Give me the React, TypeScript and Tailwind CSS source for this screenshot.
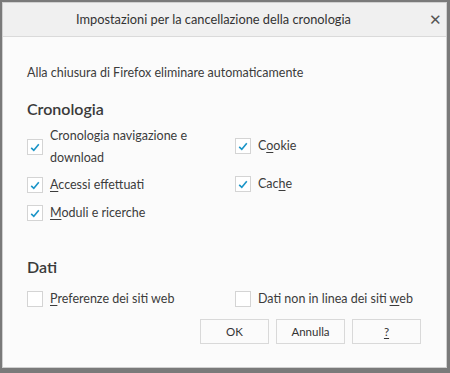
import React from "react";

function Box({ checked }: { checked?: boolean }) {
  return (
    <span className="flex h-[16px] w-[16px] shrink-0 items-center justify-center border border-[#d4d4d4] bg-white">
      {checked && (
        <svg width="10" height="9" viewBox="0 0 10 9">
          <path d="M1.2 4.8 L3.8 7.3 L8.8 1.3" fill="none" stroke="#1b95c8" strokeWidth="1.6" />
        </svg>
      )}
    </span>
  );
}

function Item({ checked, children, className = "" }: { checked?: boolean; children: React.ReactNode; className?: string }) {
  return (
    <div className={"flex items-center gap-[7px] " + className}>
      <Box checked={checked} />
      <div className="leading-[22px]">{children}</div>
    </div>
  );
}

export default function App() {
  return (
    <div
      className="h-[373px] w-[450px] bg-[#7a7a7a] text-[#3c3c3c]"
      style={{ fontFamily: 'Lato, "Noto Sans", sans-serif' }}
    >
      <div className="ml-[2px] h-[368px] w-[445px] pt-[2px]">
        <div className="flex h-full flex-col border border-[#d0d0d0] bg-[#fbfbfb]">
          <div className="relative flex h-[34px] shrink-0 items-center justify-center border-b border-[#dadada] bg-[#f0f0f0] pr-[22px] text-[12.8px] text-[#333]">
            Impostazioni per la cancellazione della cronologia
            <span className="absolute right-[4px] top-[8px] text-[15px] leading-[16px] text-[#555]">✕</span>
          </div>
          <div className="flex flex-1 flex-col px-[24px] text-[12.5px]">
            <div className="mt-[28px] leading-[16px]">Alla chiusura di Firefox eliminare automaticamente</div>
            <div className="mt-[19px] text-[16px] font-semibold leading-[18px] text-[#3a3a3a]">Cronologia</div>
            <div className="mt-[7px] flex">
              <div className="flex w-[208px] flex-col">
                <Item checked>
                  Cronologia navigazione e<br />download
                </Item>
                <Item checked className="mt-[5px]">
                  <span className="underline decoration-1 underline-offset-2">A</span>ccessi effettuati
                </Item>
                <Item checked className="mt-[6px]">
                  <span className="underline underline-offset-2">M</span>oduli e ricerche
                </Item>
              </div>
              <div className="flex flex-col pt-[10px]">
                <Item checked>
                  C<span className="underline underline-offset-2">o</span>okie
                </Item>
                <Item checked className="mt-[16px]">
                  Cac<span className="underline underline-offset-2">h</span>e
                </Item>
              </div>
            </div>
            <div className="mt-[34px] text-[16px] font-semibold leading-[18px] text-[#3a3a3a]">Dati</div>
            <div className="mt-[12px] flex">
              <Item className="w-[208px]">
                <span className="underline underline-offset-2">P</span>referenze dei siti web
              </Item>
              <Item>
                Dati non in linea dei siti <span className="underline underline-offset-2">w</span>eb
              </Item>
            </div>
            <div className="mt-[9px] flex justify-end gap-[7px] pr-[1px]">
              {["OK", "Annulla"].map((t) => (
                <button key={t} className="h-[25px] w-[69px] border border-[#d9d9d9] bg-[#fbfbfb] text-[11.5px] text-[#333]">
                  {t}
                </button>
              ))}
              <button className="h-[25px] w-[69px] border border-[#d9d9d9] bg-[#fbfbfb] text-[11.5px] text-[#333]">
                <span className="underline underline-offset-2">?</span>
              </button>
            </div>
          </div>
        </div>
      </div>
    </div>
  );
}
